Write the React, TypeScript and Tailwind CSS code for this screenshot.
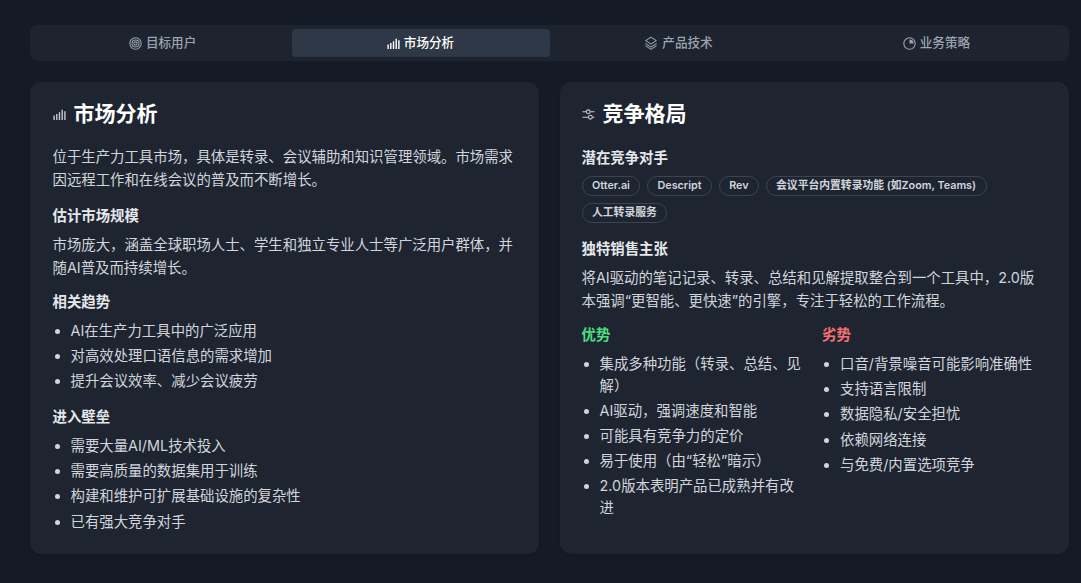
import React from "react";

const fontStack = "font-['Inter','Noto_Sans_CJK_SC',sans-serif]";

const TargetIcon = () => (
    <svg width="13" height="13" viewBox="0 0 24 24" fill="none" stroke="currentColor" strokeWidth="2">
        <circle cx="12" cy="12" r="10.5" />
        <circle cx="12" cy="12" r="6.5" />
        <circle cx="12" cy="12" r="3" />
    </svg>
);

const BarsIcon = ({ size = 13 }: { size?: number }) => (
    <svg width={size} height={size} viewBox="0 0 24 24" fill="none" stroke="currentColor" strokeWidth="2.6">
        <path d="M2 22v-8M7 22V11M12 22V8M17 22V3M22 22V6" />
    </svg>
);

const LayersIcon = () => (
    <svg width="14" height="14" viewBox="0 0 24 24" fill="none" stroke="currentColor" strokeWidth="1.8" strokeLinejoin="round" strokeLinecap="round">
        <path d="M12 2 3 8l9 6 9-6-9-6Z" />
        <path d="m3 13 9 6 9-6" />
        <path d="m3 17 9 6 9-6" />
    </svg>
);

const PieIcon = () => (
    <svg width="13" height="13" viewBox="0 0 24 24" fill="none" stroke="currentColor" strokeWidth="2">
        <circle cx="12" cy="12" r="10.5" />
        <path d="M12 4.5V12h7.5A7.5 7.5 0 0 0 12 4.5Z" fill="currentColor" stroke="none" />
    </svg>
);

const SlidersIcon = () => (
    <svg width="13" height="13" viewBox="0 0 24 24" fill="none" stroke="currentColor" strokeWidth="2">
        <path d="M1 7h7M15 7h8M1 17h11M19 17h4" />
        <circle cx="11.5" cy="7" r="3.5" />
        <circle cx="15.5" cy="17" r="3.5" />
    </svg>
);

const tabs = [
    { label: "目标用户", icon: <TargetIcon /> },
    { label: "市场分析", icon: <BarsIcon />, active: true },
    { label: "产品技术", icon: <LayersIcon /> },
    { label: "业务策略", icon: <PieIcon /> },
];

const Heading = ({ children }: { children: React.ReactNode }) => (
    <h3 className="text-[14.4px] leading-[23px] font-semibold text-[#e5e7eb]">{children}</h3>
);

const Bullets = ({ items }: { items: string[] }) => (
    <ul className="list-disc pl-[18px] mt-[7px] flex flex-col gap-[3.6px] text-[14.4px] leading-[21.6px] text-[#d1d5db] marker:text-[#d1d5db]">
        {items.map((item) => (
            <li key={item}>{item}</li>
        ))}
    </ul>
);

const Card = ({ icon, title, className, children }: { icon: React.ReactNode; title: string; className: string; children: React.ReactNode }) => (
    <section className={`bg-[#1e2531] rounded-[11px] pt-[17px] pb-[22px] shadow-sm ${className}`}>
        <div className="flex items-center gap-[8px] h-[30px]">
            <span className="text-[#c4c8cf]">{icon}</span>
            <h2 className="text-[21px] leading-[30px] font-semibold text-white">{title}</h2>
        </div>
        {children}
    </section>
);

const Badge = ({ children }: { children: React.ReactNode }) => (
    <span className="inline-flex items-center h-[20px] px-[9.5px] rounded-full border border-[#3a4452] text-[10.8px] font-semibold text-[#d1d5db]">
        {children}
    </span>
);

export default function App() {
    return (
        <div className={`${fontStack} min-h-[583px] bg-[#151b26] pl-[30px] pr-[12px] pt-[25px]`}>
            <div className="grid grid-cols-4 h-[36px] px-[3.6px] py-[4px] rounded-[8px] bg-[#1d2430]">
                {tabs.map((tab) => (
                    <div
                        key={tab.label}
                        className={`flex items-center justify-center gap-[4px] rounded-[4px] text-[12.6px] font-medium ${
                            tab.active ? "bg-[#2e3846] text-white" : "text-[#9ca3af]"
                        }`}
                    >
                        {tab.icon}
                        {tab.label}
                    </div>
                ))}
            </div>

            <div className="grid grid-cols-2 gap-[21px] mt-[21px]">
                <Card icon={<BarsIcon />} title="市场分析" className="px-[22.5px]">
                    <p className="mt-[16px] text-[14.4px] leading-[23px] text-[#d1d5db]">
                        位于生产力工具市场，具体是转录、会议辅助和知识管理领域。市场需求因远程工作和在线会议的普及而不断增长。
                    </p>
                    <div className="mt-[13px]">
                        <Heading>估计市场规模</Heading>
                        <p className="mt-[6px] text-[14.4px] leading-[23px] text-[#d1d5db]">
                            市场庞大，涵盖全球职场人士、学生和独立专业人士等广泛用户群体，并随AI普及而持续增长。
                        </p>
                    </div>
                    <div className="mt-[11px]">
                        <Heading>相关趋势</Heading>
                        <Bullets items={["AI在生产力工具中的广泛应用", "对高效处理口语信息的需求增加", "提升会议效率、减少会议疲劳"]} />
                    </div>
                    <div className="mt-[13px]">
                        <Heading>进入壁垒</Heading>
                        <Bullets items={["需要大量AI/ML技术投入", "需要高质量的数据集用于训练", "构建和维护可扩展基础设施的复杂性", "已有强大竞争对手"]} />
                    </div>
                </Card>

                <Card icon={<SlidersIcon />} title="竞争格局" className="pl-[21.5px] pr-[22.5px]">
                    <div className="mt-[17px]">
                        <Heading>潜在竞争对手</Heading>
                        <div className="flex flex-wrap gap-x-[6.5px] gap-y-[7px] mt-[7px]">
                            <Badge>Otter.ai</Badge>
                            <Badge>Descript</Badge>
                            <Badge>Rev</Badge>
                            <Badge>会议平台内置转录功能 (如Zoom, Teams)</Badge>
                            <Badge>人工转录服务</Badge>
                        </div>
                    </div>
                    <div className="mt-[14px]">
                        <Heading>独特销售主张</Heading>
                        <p className="mt-[6px] text-[14.4px] leading-[23px] text-[#d1d5db]">
                            将AI驱动的笔记记录、转录、总结和见解提取整合到一个工具中，2.0版本强调“更智能、更快速”的引擎，专注于轻松的工作流程。
                        </p>
                    </div>
                    <div className="grid grid-cols-2 gap-x-[16px] mt-[11px]">
                        <div>
                            <h3 className="text-[14.4px] leading-[23px] font-semibold text-[#4ade80]">优势</h3>
                            <Bullets items={["集成多种功能（转录、总结、见解）", "AI驱动，强调速度和智能", "可能具有竞争力的定价", "易于使用（由“轻松”暗示）", "2.0版本表明产品已成熟并有改进"]} />
                        </div>
                        <div>
                            <h3 className="text-[14.4px] leading-[23px] font-semibold text-[#f87171]">劣势</h3>
                            <Bullets items={["口音/背景噪音可能影响准确性", "支持语言限制", "数据隐私/安全担忧", "依赖网络连接", "与免费/内置选项竞争"]} />
                        </div>
                    </div>
                </Card>
            </div>
        </div>
    );
}
